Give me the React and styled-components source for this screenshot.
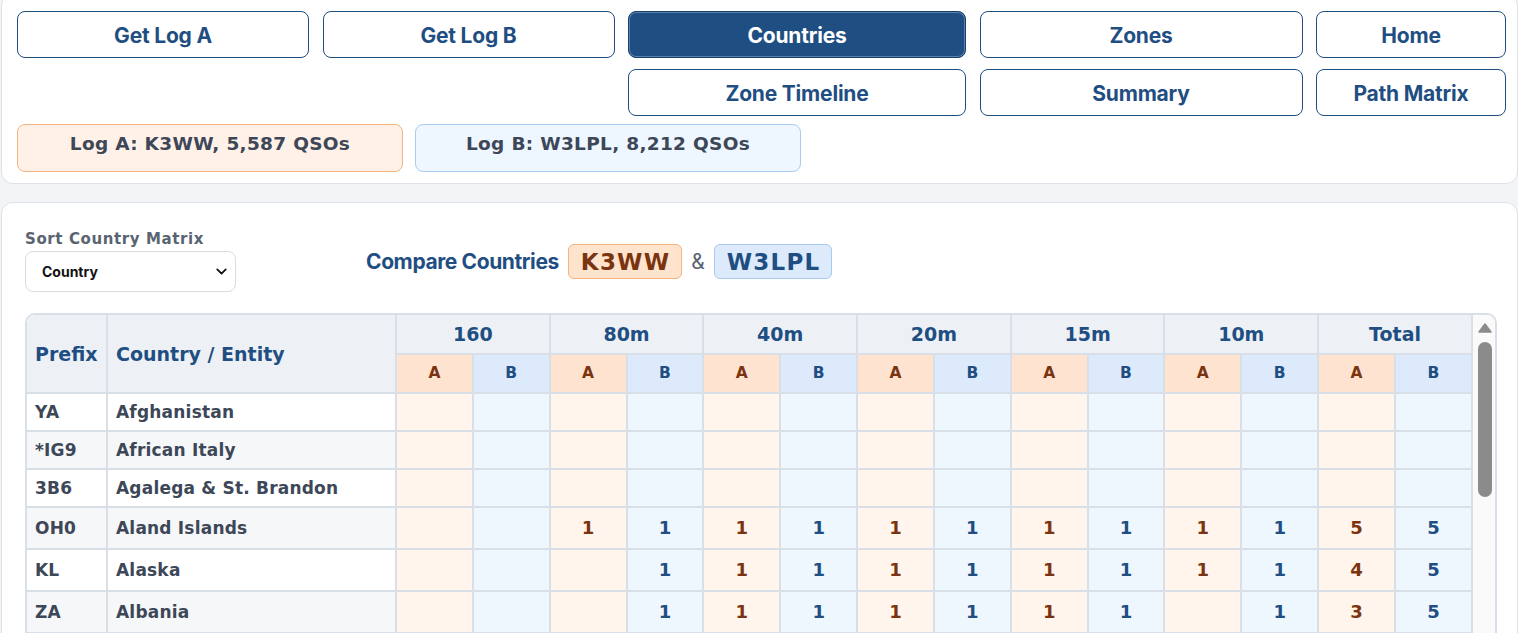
import styled, { createGlobalStyle } from "styled-components";
import { ChevronDown } from "lucide-react";

const GlobalStyle = createGlobalStyle`
  html, body {
    margin: 0;
    height: 100%;
    overflow: hidden;
    background-color: #f3f4f6;
  }
  * { box-sizing: border-box; }
`;

const Page = styled.div`
  padding: 0 0 0 1px;
  display: flex;
  flex-direction: column;
  gap: 18px;
`;

const TopCard = styled.div`
  margin-top: -6px;
  background-color: #ffffff;
  border: 1px solid #dde2e8;
  border-radius: 12px;
  padding: 16px 11px 11px 15px;
`;

const NavGrid = styled.div`
  display: grid;
  grid-template-columns: 292fr 292fr 338fr 323fr 190fr;
  grid-auto-rows: 47px;
  column-gap: 13.5px;
  row-gap: 11px;
`;

const NavButton = styled.button`
  grid-column: ${(p) => p.$col};
  border: 1.5px solid ${(p) => (p.$active ? "#173e6a" : "#1f4e82")};
  border-radius: 8px;
  background-color: ${(p) => (p.$active ? "#1f4e82" : "#ffffff")};
  box-shadow: ${(p) => (p.$active ? "inset 0 0 0 1px #5b82ad" : "none")};
  color: ${(p) => (p.$active ? "#ffffff" : "#1f4e82")};
  font-family: "Inter", "Liberation Sans", sans-serif;
  font-weight: 700;
  font-size: 21px;
  letter-spacing: -0.2px;
  display: flex;
  justify-content: center;
  align-items: center;
  padding: 1px 0 0;
`;

const LogRow = styled.div`
  display: flex;
  gap: 12px;
  margin-top: 8px;
`;

const LogBadge = styled.div`
  width: 386px;
  padding: 7px 0 15px;
  line-height: 24px;
  border-radius: 8px;
  border: 1px solid ${(p) => (p.$side === "a" ? "#f5b47e" : "#a8cbef")};
  background-color: ${(p) => (p.$side === "a" ? "#fff1e7" : "#eef6ff")};
  color: #3d4757;
  font-family: "DejaVu Sans", sans-serif;
  font-weight: 700;
  font-size: 18.5px;
  letter-spacing: 0.3px;
  text-align: center;
`;

const MainCard = styled.div`
  background-color: #ffffff;
  border: 1px solid #dde2e8;
  border-radius: 12px;
  padding: 28px 20px 0 23px;
  height: 700px;
`;

const Controls = styled.div`
  display: flex;
  align-items: center;
  gap: 130px;
`;

const SortGroup = styled.div`
  display: flex;
  flex-direction: column;
  gap: 3px;
`;

const SortLabel = styled.label`
  font-family: "DejaVu Sans", sans-serif;
  font-weight: 700;
  font-size: 15px;
  line-height: 17px;
  letter-spacing: 0.6px;
  color: #5a6371;
`;

const SelectWrap = styled.div`
  position: relative;
  width: 211px;
  height: 41px;
`;

const Select = styled.select`
  appearance: none;
  width: 100%;
  height: 100%;
  border: 1px solid #d8dde4;
  border-radius: 8px;
  background-color: #ffffff;
  padding: 0 30px 0 16px;
  font-family: "Inter", "Liberation Sans", sans-serif;
  font-weight: 700;
  font-size: 14px;
  color: #111111;
  outline: none;
`;

const SelectIcon = styled(ChevronDown)`
  position: absolute;
  right: 6px;
  top: 12px;
  pointer-events: none;
`;

const Compare = styled.div`
  display: flex;
  align-items: center;
  gap: 9px;
`;

const CompareTitle = styled.h2`
  margin: 0;
  font-family: "Inter", "Liberation Sans", sans-serif;
  font-weight: 700;
  font-size: 21px;
  letter-spacing: -0.4px;
  color: #1f4e82;
`;

const Amp = styled.span`
  font-family: "Inter", "Liberation Sans", sans-serif;
  font-size: 21px;
  color: #5a6371;
`;

const CallBadge = styled.span`
  height: 35px;
  padding: 0 11px 0 12px;
  display: flex;
  align-items: center;
  border-radius: 6px;
  border: 1px solid ${(p) => (p.$side === "a" ? "#f5b47e" : "#a8cbef")};
  background-color: ${(p) => (p.$side === "a" ? "#fee3cd" : "#dceafb")};
  color: ${(p) => (p.$side === "a" ? "#7b3411" : "#1f4e82")};
  font-family: "DejaVu Sans", sans-serif;
  font-weight: 700;
  font-size: 23px;
  letter-spacing: 1.2px;
`;

const ScrollBox = styled.div`
  margin-top: 21px;
  height: 640px;
  border: 2px solid #d8dfe7;
  border-radius: 10px;
  overflow: hidden;
  display: flex;
  background-color: #fafafa;
`;

const TableArea = styled.div`
  flex: 1;
  overflow: hidden;
`;

const ScrollTrack = styled.div`
  width: 22px;
  flex-shrink: 0;
  padding: 8px 3px 0 5px;
  display: flex;
  flex-direction: column;
  align-items: flex-start;
  gap: 9px;
  background-color: #fafafa;
`;

const ScrollThumb = styled.div`
  width: 14px;
  height: 155px;
  border-radius: 7px;
  background-color: #8b8b8b;
`;

const Table = styled.table`
  width: 100%;
  table-layout: fixed;
  border-collapse: separate;
  border-spacing: 0;
  background-color: #ffffff;
`;

const Col = styled.col`
  width: ${(p) => p.$w || "auto"};
`;

const HeadCell = styled.th`
  background-color: #edf1f6;
  border-right: 2px solid #d8dfe7;
  border-bottom: 2px solid #d8dfe7;
  padding: 7px 8px;
  line-height: 24px;
  text-align: ${(p) => p.$align || "center"};
  color: #1f4e82;
  font-family: "DejaVu Sans", sans-serif;
  font-weight: 700;
  font-size: 19px;
`;

const SubCell = styled.th`
  background-color: ${(p) => (p.$side === "a" ? "#fee4d0" : "#dceafb")};
  border-right: 2px solid #d8dfe7;
  border-bottom: 2px solid #d8dfe7;
  padding: 7px 4px;
  line-height: 23px;
  color: ${(p) => (p.$side === "a" ? "#7b3411" : "#1f4e82")};
  font-family: "DejaVu Sans", sans-serif;
  font-weight: 700;
  font-size: 15.5px;
`;

const NameCell = styled.td`
  background-color: ${(p) => (p.$alt ? "#f6f7f9" : "#ffffff")};
  border-right: 2px solid #d8dfe7;
  border-bottom: 2px solid #d8dfe7;
  padding: 8px 8px;
  line-height: 20px;
  color: #3d4757;
  font-family: "DejaVu Sans", sans-serif;
  font-weight: 700;
  font-size: 17px;
  letter-spacing: 0.2px;
  white-space: nowrap;
  overflow: hidden;
`;

const NumCell = styled.td`
  background-color: ${(p) => (p.$side === "a" ? "#fff5ec" : "#eef6fe")};
  border-right: 2px solid #d8dfe7;
  border-bottom: 2px solid #d8dfe7;
  padding: 10px 4px;
  line-height: 20px;
  text-align: center;
  color: ${(p) => (p.$side === "a" ? "#7b3411" : "#1f4e82")};
  font-family: "DejaVu Sans", sans-serif;
  font-weight: 700;
  font-size: 18px;
`;

const navTop = [
  { label: "Get Log A", col: 1 },
  { label: "Get Log B", col: 2 },
  { label: "Countries", col: 3, active: true },
  { label: "Zones", col: 4 },
  { label: "Home", col: 5 },
  { label: "Zone Timeline", col: 3 },
  { label: "Summary", col: 4 },
  { label: "Path Matrix", col: 5 },
];

const bands = ["160", "80m", "40m", "20m", "15m", "10m"];

// band values: [a, b] per band, 0 = no QSO
const known = [
  ["YA", "Afghanistan", []],
  ["*IG9", "African Italy", []],
  ["3B6", "Agalega & St. Brandon", []],
  ["OH0", "Aland Islands", [[0, 0], [1, 1], [1, 1], [1, 1], [1, 1], [1, 1]]],
  ["KL", "Alaska", [[0, 0], [0, 1], [1, 1], [1, 1], [1, 1], [1, 1]]],
  ["ZA", "Albania", [[0, 0], [0, 1], [1, 1], [1, 1], [1, 1], [0, 1]]],
];

const more = [
  ["7X", "Algeria"], ["KH8", "American Samoa"], ["C3", "Andorra"], ["D2", "Angola"],
  ["VP2E", "Anguilla"], ["3C0", "Annobon I."], ["CE9", "Antarctica"], ["V2", "Antigua & Barbuda"],
  ["LU", "Argentina"], ["EK", "Armenia"], ["P4", "Aruba"], ["ZD8", "Ascension I."],
  ["UA9", "Asiatic Russia"], ["VK", "Australia"], ["OE", "Austria"], ["4J", "Azerbaijan"],
];

const rows = [
  ...known,
  ...more.map(([p, n], i) => [
    p,
    n,
    bands.map((_, b) => [(i * 7 + b * 3) % 4 !== 0 ? 1 : 0, (i * 5 + b * 2) % 5 !== 0 ? 1 : 0]),
  ]),
];

function ScrollUpArrow() {
  return (
    <svg width="14" height="10" viewBox="0 0 14 10">
      <path d="M7 1 L13 9 L1 9 Z" fill="#8b8b8b" stroke="#8b8b8b" strokeWidth="1.5" strokeLinejoin="round" />
    </svg>
  );
}

function App() {
  return (
    <>
      <GlobalStyle />
      <Page>
        <TopCard>
          <NavGrid>
            {navTop.map((b) => (
              <NavButton key={b.label} $col={b.col} $active={b.active}>
                {b.label}
              </NavButton>
            ))}
          </NavGrid>
          <LogRow>
            <LogBadge $side="a">Log A: K3WW, 5,587 QSOs</LogBadge>
            <LogBadge $side="b">Log B: W3LPL, 8,212 QSOs</LogBadge>
          </LogRow>
        </TopCard>

        <MainCard>
          <Controls>
            <SortGroup>
              <SortLabel htmlFor="sort">Sort Country Matrix</SortLabel>
              <SelectWrap>
                <Select id="sort" defaultValue="country">
                  <option value="country">Country</option>
                  <option value="prefix">Prefix</option>
                  <option value="total">Total</option>
                </Select>
                <SelectIcon size={17} strokeWidth={2.5} color="#111" />
              </SelectWrap>
            </SortGroup>
            <Compare>
              <CompareTitle>Compare Countries</CompareTitle>
              <CallBadge $side="a">K3WW</CallBadge>
              <Amp>&amp;</Amp>
              <CallBadge $side="b">W3LPL</CallBadge>
            </Compare>
          </Controls>

          <ScrollBox>
            <TableArea>
              <Table>
                <colgroup>
                  <Col $w="81px" />
                  <Col $w="289px" />
                  {Array.from({ length: 14 }).map((_, i) => (
                    <Col key={i} />
                  ))}
                </colgroup>
                <thead>
                  <tr>
                    <HeadCell rowSpan={2} $align="left">Prefix</HeadCell>
                    <HeadCell rowSpan={2} $align="left">Country / Entity</HeadCell>
                    {[...bands, "Total"].map((b) => (
                      <HeadCell key={b} colSpan={2}>{b}</HeadCell>
                    ))}
                  </tr>
                  <tr>
                    {[...bands, "Total"].flatMap((b) => [
                      <SubCell key={b + "a"} $side="a">A</SubCell>,
                      <SubCell key={b + "b"} $side="b">B</SubCell>,
                    ])}
                  </tr>
                </thead>
                <tbody>
                  {rows.map(([prefix, name, vals], i) => {
                    const cells = bands.map((_, b) => vals[b] || [0, 0]);
                    const ta = cells.reduce((s, c) => s + c[0], 0);
                    const tb = cells.reduce((s, c) => s + c[1], 0);
                    return (
                      <tr key={prefix}>
                        <NameCell $alt={i % 2 === 1}>{prefix}</NameCell>
                        <NameCell $alt={i % 2 === 1}>{name}</NameCell>
                        {cells.flatMap((c, b) => [
                          <NumCell key={b + "a"} $side="a">{c[0] || ""}</NumCell>,
                          <NumCell key={b + "b"} $side="b">{c[1] || ""}</NumCell>,
                        ])}
                        <NumCell $side="a">{ta || ""}</NumCell>
                        <NumCell $side="b">{tb || ""}</NumCell>
                      </tr>
                    );
                  })}
                </tbody>
              </Table>
            </TableArea>
            <ScrollTrack>
              <ScrollUpArrow />
              <ScrollThumb />
            </ScrollTrack>
          </ScrollBox>
        </MainCard>
      </Page>
    </>
  );
}

export default App;
